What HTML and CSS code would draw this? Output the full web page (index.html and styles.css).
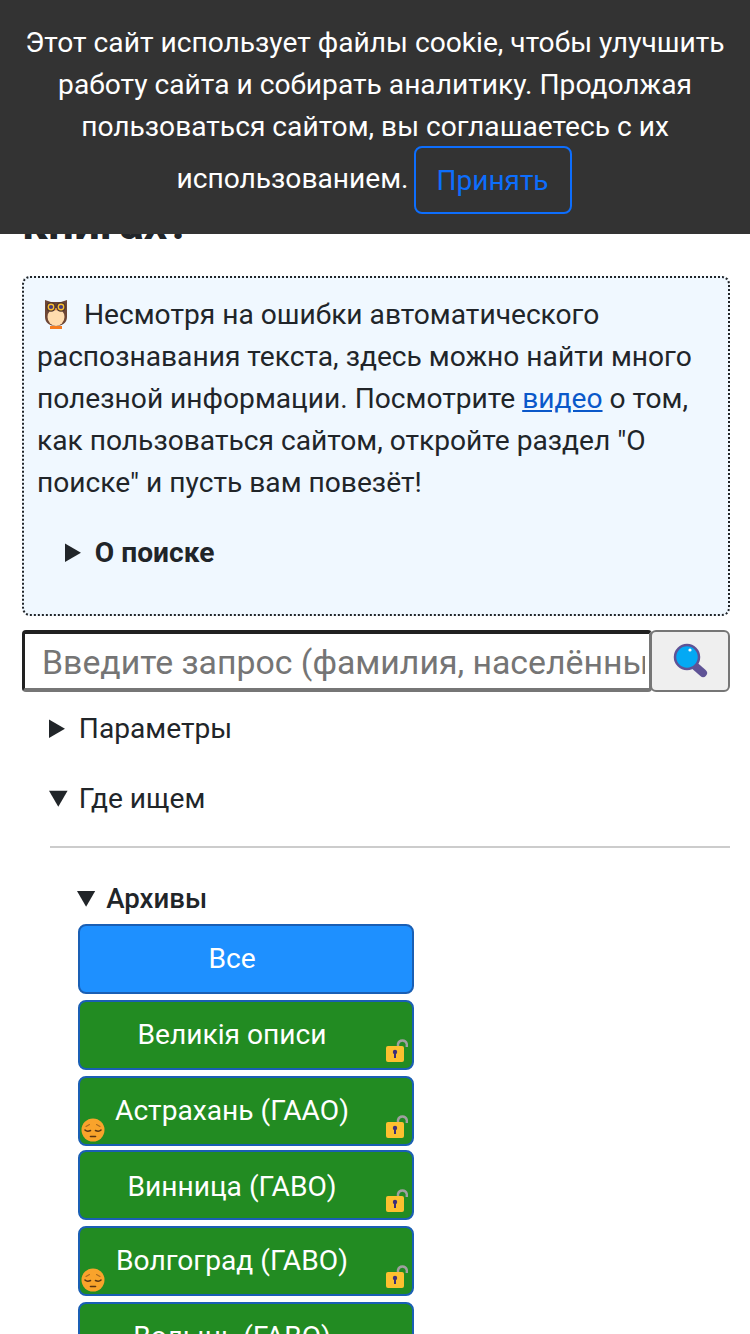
FILE: index.html
```html
<!DOCTYPE html>
<html lang="ru">
<head>
<meta charset="utf-8">
<title>Поиск</title>
<link rel="stylesheet" href="styles.css">
</head>
<body>
<div class="cookie">Этот сайт использует файлы cookie, чтобы улучшить работу сайта и собирать аналитику. Продолжая пользоваться сайтом, вы соглашаетесь с их использованием. <button class="accept">Принять</button></div>
<main class="page">
  <h2 class="title">книгах?</h2>
  <section class="info">
    <p class="info-text"><svg class="owl" viewBox="0 0 24 30"><path d="M1 1l6 2h10l6-2v17c0 6-5 9-11 9S1 24 1 18z" fill="#6d4636"/><ellipse cx="12" cy="18" rx="8.500" ry="9" fill="#ffdcae"/><circle cx="7" cy="8" r="4.800" fill="#4e342e"/><circle cx="17" cy="8" r="4.800" fill="#4e342e"/><circle cx="7" cy="8" r="3.400" fill="#fbc02d"/><circle cx="17" cy="8" r="3.400" fill="#fbc02d"/><circle cx="7" cy="8" r="2.100" fill="#4a3a78"/><circle cx="17" cy="8" r="2.100" fill="#4a3a78"/><path d="M11 10h2l-1 2z" fill="#f57c20"/><path d="M6 27h12v3H6z" fill="#f57c20"/></svg> Несмотря на ошибки автоматического распознавания текста, здесь можно найти много полезной информации. Посмотрите <a href="#">видео</a> о том, как пользоваться сайтом, откройте раздел "О поиске" и пусть вам повезёт!</p>
    <details class="about"><summary>О поиске</summary></details>
  </section>
  <form class="search">
    <input class="search-input" type="text" placeholder="Введите запрос (фамилия, населённый пункт)">
    <button class="search-btn" type="button" aria-label="Найти"><svg class="loupe" viewBox="0 0 36 36"><path d="M23 23l8 7" stroke="#5f5396" stroke-width="8" stroke-linecap="round"/><circle cx="15" cy="14" r="12" fill="#03a9f4" stroke="#5f5396" stroke-width="2.500"/><circle cx="18" cy="7" r="1.600" fill="#fff"/></svg></button>
  </form>
  <details class="group"><summary>Параметры</summary></details>
  <details class="group" open>
    <summary>Где ищем</summary>
    <hr class="rule">
    <details class="archives" open>
      <summary>Архивы</summary>
      <div class="list">
        <button class="item all" type="button">Все</button>
        <button class="item" type="button">Великія описи<svg class="lock" viewBox="0 0 22 24"><use href="#lock"/></svg></button>
        <button class="item" type="button">Астрахань (ГААО)<svg class="sad" viewBox="0 0 24 24"><use href="#sad"/></svg><svg class="lock" viewBox="0 0 22 24"><use href="#lock"/></svg></button>
        <button class="item tight" type="button">Винница (ГАВО)<svg class="lock" viewBox="0 0 22 24"><use href="#lock"/></svg></button>
        <button class="item" type="button">Волгоград (ГАВО)<svg class="sad" viewBox="0 0 24 24"><use href="#sad"/></svg><svg class="lock" viewBox="0 0 22 24"><use href="#lock"/></svg></button>
        <button class="item" type="button">Волынь (ГАВО)<svg class="lock" viewBox="0 0 22 24"><use href="#lock"/></svg></button>
      </div>
    </details>
  </details>
</main>
<svg class="defs" width="0" height="0">
  <symbol id="lock" viewBox="0 0 22 24"><path d="M12 8V5a4.500 4.500 0 0 1 8.800 0V8" fill="none" stroke="#a0a0a0" stroke-width="2.400"/><rect x="0" y="7" width="18" height="16" rx="2" fill="#fdc02f"/><circle cx="9" cy="13" r="2.200" fill="#3d2f78"/><path d="M8 13h2v6H8z" fill="#3d2f78"/></symbol>
  <symbol id="sad" viewBox="0 0 24 24"><circle cx="12" cy="12" r="11.500" fill="#f9a32b"/><path d="M4 12c1.500 1.500 3.500 1.500 5.500.5M14.500 12.500c2 1 4 1 5.500-.5" fill="none" stroke="#5a3412" stroke-width="1.600" stroke-linecap="round"/><path d="M5 8.500l3.500-2M19 8.500l-3.500-2" fill="none" stroke="#a8691e" stroke-width="1.100" stroke-linecap="round"/><path d="M9.500 18.500h5" fill="none" stroke="#5a3412" stroke-width="1.600" stroke-linecap="round"/></symbol>
</svg>
</body>
</html>
```
FILE: styles.css
```css
* { box-sizing: border-box; }
html, body { margin: 0; padding: 0; }
body {
  font-family: Roboto, "Noto Sans", sans-serif;
  font-size: 28.16px;
  line-height: 42px;
  color: #212529;
  background: #fff;
  height: 1334px;
  overflow: hidden;
}
.cookie {
  position: fixed;
  top: 0;
  left: 0;
  right: 0;
  height: 234px;
  padding: 22px 20px 0;
  background: #333;
  color: #fff;
  text-align: center;
  z-index: 5;
}
.accept {
  height: 68px;
  padding: 0 21px;
  margin: -2px 2px 0 -2px;
  vertical-align: -2px;
  font: 28px Roboto, sans-serif;
  color: #0d6efd;
  background: transparent;
  border: 2px solid #0d6efd;
  border-radius: 8px;
}
.page { padding: 0 20px 0 22px; }
.title {
  margin: 0 0 31px;
  padding-top: 203px;
  font-size: 46px;
  line-height: 40px;
  font-weight: 700;
  height: 245px;
  overflow: hidden;
}
.info {
  height: 340px;
  padding: 16px 13px 0;
  background: aliceblue;
  border: 2px dotted #212529;
  border-radius: 8px;
}
.info-text { margin: 0 0 28px; }
.owl { width: 24px; height: 30px; margin: 0 9px 0 7px; vertical-align: -5px; }
.info-text a { color: #0a58ca; }
.about { padding-left: 28px; font-weight: 700; }
.search { display: flex; margin-top: 14px; height: 62px; }
.search-input {
  flex: 1;
  min-width: 0;
  margin-right: -2px;
  padding: 2px 4px 0 17px;
  font: 33.8px Roboto, sans-serif;
  border-style: solid;
  border-width: 4px 3px;
  border-color: #212121 #767676 #767676 #212121;
  border-radius: 4px;
  background: #fff;
}
.search-input::placeholder { color: #757575; }
.search-btn {
  position: relative;
  flex: none;
  width: 80px;
  padding: 0;
  display: flex;
  align-items: center;
  justify-content: center;
  background: #efefef;
  border: 2px solid #767676;
  border-radius: 6px;
}
.loupe { width: 36px; height: 36px; }
.group { margin-top: 16px; padding-left: 27px; }
.group + .group { margin-top: 28px; }
.rule { height: 2px; border: 0; background: #ccc; margin: 26px 0 30px 1px; }
.archives { padding-left: 28px; }
.archives > summary { font-weight: 500; font-size: 27.6px; }
.list { display: flex; flex-direction: column; gap: 6px; width: 336px; margin: 4px 0 0 1px; }
.item {
  position: relative;
  flex: none;
  height: 70px;
  padding: 0 28px 0 0;
  font: inherit;
  color: #fff;
  background: #228b22;
  border: 2px solid #1a5fb4;
  border-radius: 8px;
}
.item.tight { margin-top: -2px; padding-top: 4px; }
.item.all { background: #1e90ff; }
.lock { position: absolute; right: 4px; bottom: 5px; width: 22px; height: 24px; }
.sad { position: absolute; left: 1px; bottom: 2px; width: 24px; height: 24px; }
.defs { position: absolute; }
```
